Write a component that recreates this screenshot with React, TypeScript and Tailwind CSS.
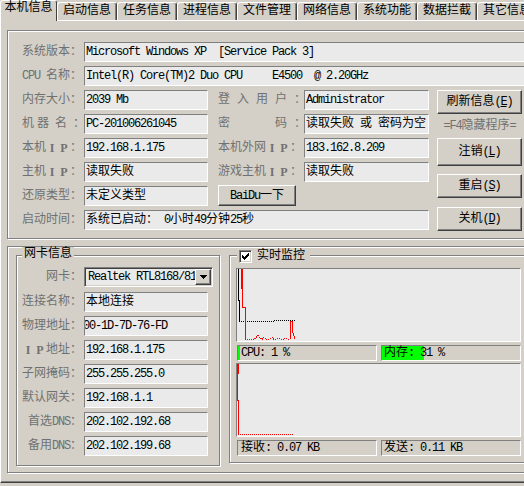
import React from 'react';

const ascii = /^[\x20-\x7e]+$/;

// latin runs get squeezed to a 6px cell, like the bitmap font in the original
function T({ s }: { s: string }) {
    const parts = s.split(/([\x20-\x7e]+)/).filter((p) => p !== '');
    return (
        <>
            {parts.map((p, i) =>
                ascii.test(p) ? (
                    <span key={i} className="tracking-[-1.2px]">
                        {p}
                    </span>
                ) : (
                    <span key={i}>{p}</span>
                ),
            )}
        </>
    );
}

function IP() {
    return (
        <>
            <span className="inline-block w-[12px] text-center font-['Liberation_Serif'] font-bold">I</span>
            <span className="inline-block w-[12px] text-center font-['Liberation_Serif'] font-bold">P</span>
        </>
    );
}

function Lbl({ w, right, children }: { w: string; right?: boolean; children: React.ReactNode }) {
    return (
        <div className={`${w} h-[20px] shrink-0 flex items-center whitespace-pre text-[#707070] ${right ? 'justify-end pr-[2px]' : ''}`}>
            {children}
        </div>
    );
}

function Field({ w, children }: { w: string; children: React.ReactNode }) {
    return (
        <div className={`${w} h-[20px] shrink-0 flex items-center overflow-hidden whitespace-pre border border-t-[#808080] border-l-[#808080] border-r-white border-b-white bg-[#eaeaea] pl-px text-black`}>
            {children}
        </div>
    );
}

function Btn({ cls, children }: { cls: string; children: React.ReactNode }) {
    return (
        <div className={`${cls} shrink-0 flex items-center justify-center whitespace-pre border border-t-white border-l-white border-r-[#404040] border-b-[#404040] shadow-[inset_-1px_-1px_0_#808080] bg-[#d4d0c8] text-black`}>
            {children}
        </div>
    );
}

function Key({ k }: { k: string }) {
    return (
        <>
            <span className="tracking-[-1.2px]">(</span>
            <span className="tracking-[-1.2px] underline">{k}</span>
            <span className="tracking-[-1.2px]">)</span>
        </>
    );
}

const tabs = ['启动信息', '任务信息', '进程信息', '文件管理', '网络信息', '系统功能', '数据拦截', '其它信息'];

function Tabs() {
    return (
        <div className="flex items-end h-[20px] w-[540px]">
            <div className="relative z-10 -mb-px w-[57px] h-[21px] shrink-0 bg-[#d4d0c8] border-t border-l border-r border-t-white border-l-white border-r-[#404040] rounded-t-[3px] flex justify-center">
                本机信息
            </div>
            {tabs.map((t) => (
                <div
                    key={t}
                    className="w-[60px] h-[18px] shrink-0 border-t border-l border-r border-t-white border-l-white border-r-[#404040] shadow-[inset_-1px_0_0_#808080] rounded-t-[3px] flex items-center justify-center pb-[1px]"
                >
                    {t}
                </div>
            ))}
        </div>
    );
}

function TopGroup() {
    return (
        <div className="w-[530px] h-[209px] border border-[#808080] shadow-[inset_1px_1px_0_#fff,1px_1px_0_#fff] pt-[11px] pl-[14px]">
            <div className="flex">
                <Lbl w="w-[62px]">系统版本：</Lbl>
                <Field w="w-[446px]">
                    <T s="Microsoft Windows XP  [Service Pack 3]" />
                </Field>
            </div>
            <div className="mt-[4px] flex">
                <Lbl w="w-[62px]">
                    <T s="CPU " />
                    名称：
                </Lbl>
                <Field w="w-[446px]">
                    <T s="Intel(R) Core(TM)2 Duo CPU     E4500  @ 2.20GHz" />
                </Field>
            </div>
            <div className="mt-[4px] flex items-start">
                <div className="w-[407px] shrink-0 flex flex-col gap-[4px]">
                    <div className="flex">
                        <Lbl w="w-[62px]">内存大小：</Lbl>
                        <Field w="w-[124px]">
                            <T s="2039 Mb" />
                        </Field>
                        <div className="ml-[10px]" />
                        <Lbl w="w-[86px]">
                            <span className="tracking-[7px]">登入用户：</span>
                        </Lbl>
                        <Field w="w-[125px]">
                            <T s="Administrator" />
                        </Field>
                    </div>
                    <div className="flex">
                        <Lbl w="w-[62px]">
                            <span>机</span>
                            <span className="ml-[3px]">器</span>
                            <span className="ml-[6px]">名</span>
                            <span className="ml-[6px]">：</span>
                        </Lbl>
                        <Field w="w-[124px]">
                            <T s="PC-201006261045" />
                        </Field>
                        <div className="ml-[10px]" />
                        <Lbl w="w-[86px]">
                            <span>密</span>
                            <span className="ml-[45px]">码</span>
                            <span className="ml-[7px]">：</span>
                        </Lbl>
                        <Field w="w-[125px]">
                            <T s="读取失败 或 密码为空" />
                        </Field>
                    </div>
                    <div className="flex">
                        <Lbl w="w-[62px]">
                            本机
                            <IP />：
                        </Lbl>
                        <Field w="w-[124px]">
                            <T s="192.168.1.175" />
                        </Field>
                        <div className="ml-[10px]" />
                        <Lbl w="w-[86px]">
                            本机外网
                            <IP />：
                        </Lbl>
                        <Field w="w-[125px]">
                            <T s="183.162.8.209" />
                        </Field>
                    </div>
                    <div className="flex">
                        <Lbl w="w-[62px]">
                            主机
                            <IP />：
                        </Lbl>
                        <Field w="w-[124px]">读取失败</Field>
                        <div className="ml-[10px]" />
                        <Lbl w="w-[86px]">
                            游戏主机
                            <IP />：
                        </Lbl>
                        <Field w="w-[125px]">读取失败</Field>
                    </div>
                    <div className="flex items-start h-[20px]">
                        <Lbl w="w-[62px]">还原类型：</Lbl>
                        <Field w="w-[124px]">未定义类型</Field>
                        <div className="ml-[10px]" />
                        <Btn cls="w-[78px] h-[21px] -mt-px">
                            <T s="BaiDu一下" />
                        </Btn>
                    </div>
                    <div className="flex">
                        <Lbl w="w-[62px]">启动时间：</Lbl>
                        <Field w="w-[345px]">
                            <T s="系统已启动： 0小时49分钟25秒" />
                        </Field>
                    </div>
                </div>
                <div className="ml-[8px] w-[85px] shrink-0 flex flex-col">
                    <Btn cls="w-[85px] h-[24px]">
                        刷新信息
                        <Key k="E" />
                    </Btn>
                    <div className="h-[24px] flex items-center justify-center whitespace-pre text-[#707070]">
                        <T s="=F4隐藏程序=" />
                    </div>
                    <Btn cls="w-[85px] h-[28px]">
                        注销
                        <Key k="L" />
                    </Btn>
                    <Btn cls="w-[85px] h-[24px] mt-[8px]">
                        重启
                        <Key k="S" />
                    </Btn>
                    <Btn cls="w-[85px] h-[24px] mt-[9px]">
                        关机
                        <Key k="D" />
                    </Btn>
                </div>
            </div>
        </div>
    );
}

const nicRows: [React.ReactNode, React.ReactNode][] = [
    ['连接名称：', '本地连接'],
    [
        '物理地址：',
        <span className="-ml-[3px]">
            <T s="00-1D-7D-76-FD" />
        </span>,
    ],
    [
        <>
            <IP />
            地址：
        </>,
        <T s="192.168.1.175" />,
    ],
    ['子网掩码：', <T s="255.255.255.0" />],
    ['默认网关：', <T s="192.168.1.1" />],
    [<T s="首选DNS：" />, <T s="202.102.192.68" />],
    [<T s="备用DNS：" />, <T s="202.102.199.68" />],
];

function NicGroup() {
    return (
        <div className="relative ml-[8px] mt-[8px] w-[204px] h-[211px] shrink-0 border border-[#808080] shadow-[inset_1px_1px_0_#fff,1px_1px_0_#fff] pt-[11px]">
            <div className="absolute left-[5px] top-[-9px] px-[2px] bg-[#d4d0c8] leading-[14px]">网卡信息</div>
            <div className="flex">
                <Lbl w="w-[67px]" right>
                    网卡：
                </Lbl>
                <div className="w-[129px] h-[20px] shrink-0 flex border border-t-[#808080] border-l-[#808080] border-r-white border-b-white shadow-[inset_1px_1px_0_#404040,inset_-1px_-1px_0_#d4d0c8] bg-[#eaeaea] p-px">
                    <div className="flex-1 overflow-hidden whitespace-pre pl-[2px] flex items-center">
                        <T s="Realtek RTL8168/8111 PCI-E" />
                    </div>
                    <div className="w-[16px] h-full shrink-0 flex items-center justify-center border border-t-white border-l-white border-r-[#404040] border-b-[#404040] shadow-[inset_-1px_-1px_0_#808080] bg-[#d4d0c8]">
                        <svg width="7" height="4" viewBox="0 0 7 4" shapeRendering="crispEdges">
                            <path d="M0 0H7L3.5 4Z" fill="#000" />
                        </svg>
                    </div>
                </div>
            </div>
            {nicRows.map(([l, v], i) => (
                <div key={i} className={`flex ${i === 0 ? 'mt-[5px]' : 'mt-[4px]'}`}>
                    <Lbl w="w-[67px]" right>
                        {l}
                    </Lbl>
                    <Field w="w-[124px]">{v}</Field>
                </div>
            ))}
        </div>
    );
}

function Chart({ children }: { children: React.ReactNode }) {
    return (
        <div className="w-[285px] h-[74px] border border-t-[#808080] border-l-[#808080] border-r-white border-b-white bg-[#eaeaea]">
            <svg width="283" height="72" viewBox="0 0 283 72" shapeRendering="crispEdges" className="block">
                {children}
            </svg>
        </div>
    );
}

function Stat({ cls, children }: { cls: string; children: React.ReactNode }) {
    return (
        <div className={`${cls} w-[140px] h-[16px] flex items-center whitespace-pre border border-t-[#808080] border-l-[#808080] border-r-white border-b-white`}>
            {children}
        </div>
    );
}

const checkCols = [2, 3, 4, 3, 2, 1, 0];

function MonitorGroup() {
    return (
        <div className="relative ml-[9px] mt-[8px] w-[296px] h-[208px] shrink-0 border border-[#808080] shadow-[inset_1px_1px_0_#fff,1px_1px_0_#fff] pt-[12px] pl-[6px]">
            <div className="absolute left-[7px] top-[-7px] h-[14px] flex items-center gap-[5px] pl-[2px] pr-[5px] bg-[#d4d0c8]">
                <div className="w-[13px] h-[13px] flex items-center justify-center bg-white border border-t-[#808080] border-l-[#808080] border-r-white border-b-white shadow-[inset_1px_1px_0_#404040,inset_-1px_-1px_0_#d4d0c8]">
                    <svg width="7" height="7" viewBox="0 0 7 7" shapeRendering="crispEdges">
                        {checkCols.map((y, x) => (
                            <rect key={x} x={x} y={y} width="1" height="3" fill="#000" />
                        ))}
                    </svg>
                </div>
                <span>实时监控</span>
            </div>

            <Chart>
                <polyline points="1.5,0 1.5,31 2.5,31 2.5,52" fill="none" stroke="#000" />
                <path d="M2 52.5H37M37 51.5H58" stroke="#000" strokeDasharray="1 1" />
                <polyline points="4.5,0 4.5,19 5.5,19 5.5,38 8.5,38 8.5,70" fill="none" stroke="#ff0000" />
                <line x1="5.5" y1="0" x2="5.5" y2="19" stroke="#ff0000" />
                <polyline
                    points="8,70.5 17,70.5 19,68.5 21,65.5 23,68.5 25,70.5 27,68.5 29,70.5 33,70.5 35,68.5 37,70.5 41,69.5 45,70.5 48,69.5 53,70.5"
                    fill="none"
                    stroke="#ff0000"
                    strokeDasharray="1 1"
                />
                <polyline points="53.5,70 53.5,52 55.5,52 55.5,62 57,67 58,70" fill="none" stroke="#ff0000" />
            </Chart>

            <div className="mt-[3px] ml-px flex gap-[4px]">
                <Stat cls="">
                    <div className="w-[2px] h-full bg-[#00ff00]" />
                    <span className="ml-px">
                        <T s="CPU: 1 %" />
                    </span>
                </Stat>
                <Stat cls="pl-[1px] bg-[linear-gradient(to_right,#00ff00_42px,transparent_42px)] bg-no-repeat bg-[length:43px_100%]">
                    <span className="ml-px">
                        <T s="内存: 31 %" />
                    </span>
                </Stat>
            </div>

            <div className="mt-[2px]">
                <Chart>
                    <polyline points="0.5,0 0.5,36 1.5,36 1.5,70" fill="none" stroke="#ff0000" />
                    <line x1="1.5" y1="0" x2="1.5" y2="10" stroke="#ff0000" />
                    <path d="M1 70.5H56" stroke="#ff0000" strokeDasharray="1 1" />
                </Chart>
            </div>

            <div className="mt-[3px] ml-px flex gap-[4px]">
                <Stat cls="pl-[3px]">
                    <T s="接收: 0.07 KB" />
                </Stat>
                <Stat cls="pl-[2px]">
                    <T s="发送: 0.11 KB" />
                </Stat>
            </div>
        </div>
    );
}

export default function App() {
    return (
        <div className="w-[524px] h-[486px] overflow-hidden bg-[#d4d0c8] font-['Liberation_Mono','Noto_Sans_CJK_SC',monospace] text-[12px] leading-[14px] text-black">
            <Tabs />
            <div className="w-[540px] h-[463px] border-t border-l border-b border-t-white border-l-white border-b-[#404040] shadow-[inset_0_-1px_0_#808080] pt-[9px] pl-[6px]">
                <TopGroup />
                <div className="mt-[7px] w-[530px] h-[227px] border border-[#808080] shadow-[inset_1px_1px_0_#fff,1px_1px_0_#fff] flex items-start">
                    <NicGroup />
                    <MonitorGroup />
                </div>
            </div>
        </div>
    );
}
